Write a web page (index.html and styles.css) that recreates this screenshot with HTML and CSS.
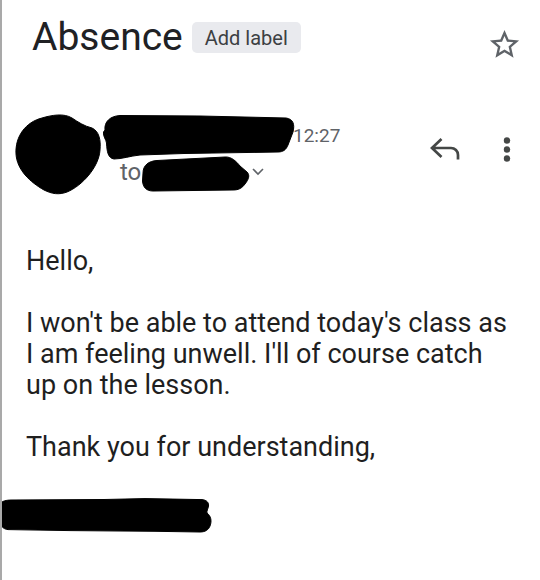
FILE: index.html
```html
<!DOCTYPE html>
<html lang="en">
<head>
<meta charset="utf-8">
<title>Absence</title>
<link rel="stylesheet" href="styles.css">
</head>
<body>
<div class="page">
  <header class="subject">
    <h1 class="title">Absence</h1>
    <span class="chip">Add label</span>
    <svg class="star" width="35" height="35" viewBox="0 0 24 24" aria-label="Star">
      <path d="M22 9.24l-7.19-.62L12 2 9.19 8.63 2 9.24l5.46 4.73L5.82 21 12 17.27 18.18 21l-1.63-7.03L22 9.24zM12 15.4l-3.76 2.27 1-4.28-3.32-2.88 4.38-.38L12 6.1l1.71 4.04 4.38.38-3.32 2.88 1 4.28L12 15.4z"/>
    </svg>
  </header>

  <section class="sender">
    <svg class="avatar" width="90" height="85" viewBox="0 0 90 85">
      <path class="redact" d="M 4 42 C 3 24, 14 10, 30 6 C 40 3, 52 1, 60 6 C 66 10, 72 14, 80 16 C 87 19, 89 28, 88 38 C 87 55, 70 74, 55 80 C 47 83, 40 82, 32 78 C 18 70, 5 58, 4 42 Z"/>
    </svg>
    <div class="meta">
      <div class="nameline">
        <svg class="name-redact" width="198" height="50" viewBox="0 0 198 50">
          <path class="redact" d="M 5 18 C 4 10, 10 4, 20 3.5 L 100 4 L 186 6 C 193 7, 195 12, 193 20 L 188 33 C 186 38, 183 40, 178 40 L 84 41.5 L 40 43 C 30 44, 22 47, 14 47 C 8 46, 7 40, 6.5 31 C 6 27, 3 25, 3.5 20 Z"/>
        </svg>
        <span class="time">12:27</span>
      </div>
      <div class="toline">
        <span class="to">to</span>
        <svg class="to-redact" width="112" height="38" viewBox="0 0 112 38">
          <path class="redact" d="M 2 18 C 2 10, 8 6, 16 5.5 L 84 2 C 90 1.5, 95 6, 99 11 L 106 17 C 109 20, 108 24, 104 29 C 101 33, 98 35, 92 35 L 12 36 C 5 36, 2 32, 1.5 26 Z"/>
        </svg>
        <svg class="chev" width="14" height="9" viewBox="0 0 14 9">
          <path d="M2 2 L7 7 L12 2"/>
        </svg>
      </div>
    </div>
    <div class="actions">
      <svg class="reply" width="32" height="24" viewBox="0 0 32 24" aria-label="Reply">
        <path d="M11.5 2 L2 11 L11.5 20 M2 11 H21 A7 7 0 0 1 28 18 V22.5"/>
      </svg>
      <svg class="dots" width="8" height="26" viewBox="0 0 8 26" aria-label="More">
        <circle cx="4" cy="3.5" r="3.2"/>
        <circle cx="4" cy="12.5" r="3.2"/>
        <circle cx="4" cy="21.5" r="3.2"/>
      </svg>
    </div>
  </section>

  <div class="body">
    <p class="para">Hello,</p>
    <p class="para">I won't be able to attend today's class as<br>I am feeling unwell. I'll of course catch<br>up on the lesson.</p>
    <p class="para">Thank you for understanding,</p>
  </div>

  <svg class="signature" width="216" height="38" viewBox="0 0 216 38">
    <path class="redact" d="M 0 8 C 2 5, 6 4, 12 4 L 104 3.5 L 145 2.6 L 202 3.6 C 207 4, 209 7, 208.5 10 C 208 13, 206.5 15, 207 17 C 211 20, 212 25, 210 30 C 208.5 34, 205 36, 200 36 L 155 35.3 L 70 34.6 L 8 33.6 C 3 33, 0.5 30, 0 26 Z"/>
  </svg>
</div>
</body>
</html>
```

FILE: styles.css
```css
html, body {
  margin: 0;
  padding: 0;
  background: #ffffff;
}

body {
  font-family: Roboto, "Noto Sans", "Liberation Sans", sans-serif;
  color: #202124;
}

.page {
  box-sizing: border-box;
  min-height: 580px;
  border-left: 2px solid #a9a9a9;
  overflow: hidden;
}

/* subject header */
.subject {
  display: flex;
  align-items: flex-start;
  padding: 14px 18px 0 30px;
  height: 46px;
}

.title {
  margin: 0;
  font-size: 39px;
  font-weight: 400;
  line-height: 46px;
  color: #202124;
  letter-spacing: 0;
}

.chip {
  margin: 8px 0 0 9px;
  padding: 1px 13px 0;
  height: 30px;
  line-height: 30px;
  font-size: 20px;
  color: #3c4043;
  background: #e9eaee;
  border-radius: 5px;
}

.star {
  margin: 13px 0 0 auto;
  fill: #5f6368;
  flex-shrink: 0;
}

/* sender row */
.sender {
  display: flex;
  align-items: flex-start;
  margin-top: 52px;
  padding: 0 29px 0 10px;
}

.avatar {
  display: block;
  flex-shrink: 0;
}

.redact {
  fill: #000000;
  stroke: #000000;
  stroke-width: 1;
  stroke-linejoin: round;
}

.meta {
  display: flex;
  flex-direction: column;
  margin-left: -2px;
}

.nameline {
  display: flex;
  align-items: flex-start;
}

.name-redact {
  display: block;
  flex-shrink: 0;
}

.time {
  margin: 13px 0 0 -5px;
  font-size: 19px;
  line-height: 22px;
  color: #5f6368;
}

.toline {
  display: flex;
  align-items: flex-start;
  margin-top: -3px;
  padding-left: 20px;
}

.to {
  font-size: 24px;
  line-height: 27px;
  color: #5f6368;
}

.to-redact {
  display: block;
  margin: -4px 0 0 0;
  flex-shrink: 0;
}

.chev {
  display: block;
  margin: 8px 0 0 -2px;
  fill: none;
  stroke: #5f6368;
  stroke-width: 1.6;
}

.actions {
  display: flex;
  align-items: flex-start;
  margin: 25px 0 0 auto;
  gap: 41px;
}

.reply {
  display: block;
  fill: none;
  stroke: #444746;
  stroke-width: 2.7;
  stroke-linejoin: miter;
}

.dots {
  display: block;
  fill: #444746;
}

/* message body */
.body {
  margin-top: 49px;
  padding: 0 10px 0 24px;
  font-size: 27px;
  line-height: 31px;
  color: #1f1f1f;
}

.para {
  margin: 0 0 31px 0;
  white-space: nowrap;
}

.para:last-child {
  margin-bottom: 0;
}

.signature {
  display: block;
  margin: 33px 0 0 -2px;
}
```
